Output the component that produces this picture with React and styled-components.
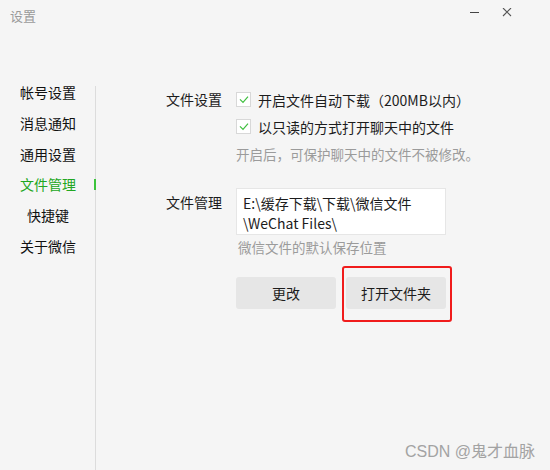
import React from "react";
import styled, { createGlobalStyle } from "styled-components";

const Global = createGlobalStyle`
  html, body { margin: 0; padding: 0; background: #f5f5f5; }
  body { font-family: "Noto Sans CJK SC", "Noto Sans", sans-serif; }
  * { box-sizing: border-box; }
`;

const Window = styled.div`
  position: relative;
  width: 550px;
  height: 470px;
  background: #f5f5f5;
  display: flex;
  flex-direction: column;
  overflow: hidden;
  color: #1c1c1c;
`;

const TitleBar = styled.div`
  height: 77px;
  display: flex;
  justify-content: space-between;
  align-items: flex-start;
  padding: 6px 0 0 10px;
`;

const Title = styled.div`
  font-size: 13px;
  line-height: 20px;
  color: #9a9a9a;
`;

const Controls = styled.div`
  display: flex;
  flex-direction: row;
  align-items: center;
  height: 10px;
  gap: 22px;
  margin: 2px 38px 0 0;
`;

const Icon = styled.svg`
  display: block;
  flex: 0 0 10px;
  width: 10px;
  height: 10px;
`;

const Body = styled.div`
  flex: 1;
  display: flex;
`;

const Sidebar = styled.nav`
  width: 95px;
  display: flex;
  flex-direction: column;
`;

const NavItem = styled.div`
  position: relative;
  width: 96px;
  height: 30.8px;
  line-height: 30.8px;
  text-align: center;
  font-size: 14px;
  color: ${(p) => (p.$active ? "#22a722" : "#111")};
  ${(p) =>
    p.$active &&
    `&::after {
      content: "";
      position: absolute;
      right: 0;
      top: 10px;
      width: 2px;
      height: 11px;
      background: #3cc43c;
    }`}
`;

const Divider = styled.div`
  width: 1px;
  margin-top: 9px;
  background: #dcdcdc;
`;

const Content = styled.div`
  flex: 1;
  padding: 9px 0 0 70px;
  display: flex;
  flex-direction: column;
`;

const Section = styled.div`
  display: grid;
  grid-template-columns: 70px 1fr;
  margin-top: ${(p) => p.$gap || 0}px;
`;

const Label = styled.div`
  font-size: 14px;
  line-height: ${(p) => p.$lh || 27}px;
  padding-top: ${(p) => p.$pt || 0}px;
  color: #1c1c1c;
`;

const Column = styled.div`
  display: flex;
  flex-direction: column;
`;

const CheckRow = styled.label`
  display: flex;
  align-items: center;
  gap: 7px;
  height: 27px;
  font-size: 14px;
  color: #1c1c1c;
`;

const Box = styled.span`
  width: 15px;
  height: 15px;
  background: #fff;
  border: 1px solid #d8d8d8;
  display: flex;
  align-items: center;
  justify-content: center;
`;

const Hint = styled.div`
  font-size: 13.5px;
  line-height: 20px;
  color: #9b9b9b;
  margin-top: ${(p) => p.$mt || 0}px;
  padding-left: ${(p) => p.$pl || 0}px;
`;

const PathBox = styled.div`
  width: 210px;
  height: 47px;
  background: #fff;
  border: 1px solid #e6e6e6;
  padding: 4px 6px 0 6px;
  font-size: 14px;
  line-height: 20px;
  color: #1c1c1c;
`;

const PathLine = styled.div`
  white-space: nowrap;
`;

const ButtonRow = styled.div`
  display: flex;
  gap: 10px;
  margin-top: 20px;
`;

const Button = styled.button`
  position: relative;
  width: 100px;
  height: 32px;
  border: none;
  border-radius: 3px;
  background: #e6e6e6;
  font-family: inherit;
  font-size: 14px;
  color: #1c1c1c;
  padding: 0;
  ${(p) =>
    p.$highlight &&
    `&::after {
      content: "";
      position: absolute;
      top: -11px;
      bottom: -13px;
      left: -4px;
      right: -6px;
      border: 2px solid #f01c1c;
      border-radius: 3px;
    }`}
`;

const Watermark = styled.div`
  position: absolute;
  right: 15px;
  top: 441px;
  font-family: "Liberation Sans", "Noto Sans CJK SC", sans-serif;
  font-size: 16px;
  line-height: 22px;
  color: #a3a3a3;
`;

const Check = () => (
  <svg width="15" height="15" viewBox="0 0 15 15" style={{ display: "block", margin: -1 }}>
    <path d="M4 7.3 L7 10.3 L12 4.6" fill="none" stroke="#3ebf3e" strokeWidth="1.2" />
  </svg>
);

const navs = ["帐号设置", "消息通知", "通用设置", "文件管理", "快捷键", "关于微信"];

export default function App() {
  return (
    <>
      <Global />
      <Window>
        <TitleBar>
          <Title>设置</Title>
          <Controls>
            <Icon width="10" height="10" viewBox="0 0 10 10">
              <line x1="0" y1="4.5" x2="9" y2="4.5" stroke="#444" strokeWidth="1" />
            </Icon>
            <Icon width="10" height="10" viewBox="0 0 10 10">
              <path d="M1 0 L9 8 M9 0 L1 8" stroke="#555" strokeWidth="1.1" />
            </Icon>
          </Controls>
        </TitleBar>
        <Body>
          <Sidebar>
            {navs.map((n) => (
              <NavItem key={n} $active={n === "文件管理"}>
                {n}
              </NavItem>
            ))}
          </Sidebar>
          <Divider />
          <Content>
            <Section>
              <Label>文件设置</Label>
              <Column>
                <CheckRow>
                  <Box>
                    <Check />
                  </Box>
                  开启文件自动下载（200MB以内）
                </CheckRow>
                <CheckRow>
                  <Box>
                    <Check />
                  </Box>
                  以只读的方式打开聊天中的文件
                </CheckRow>
                <Hint $mt={4}>开启后，可保护聊天中的文件不被修改。</Hint>
              </Column>
            </Section>
            <Section $gap={24}>
              <Label $lh={20} $pt={4}>
                文件管理
              </Label>
              <Column>
                <PathBox>
                  <PathLine>E:\缓存下载\下载\微信文件</PathLine>
                  <PathLine>\WeChat Files\</PathLine>
                </PathBox>
                <Hint $mt={2} $pl={2}>微信文件的默认保存位置</Hint>
                <ButtonRow>
                  <Button>更改</Button>
                  <Button $highlight>打开文件夹</Button>
                </ButtonRow>
              </Column>
            </Section>
          </Content>
        </Body>
        <Watermark>CSDN @鬼才血脉</Watermark>
      </Window>
    </>
  );
}
